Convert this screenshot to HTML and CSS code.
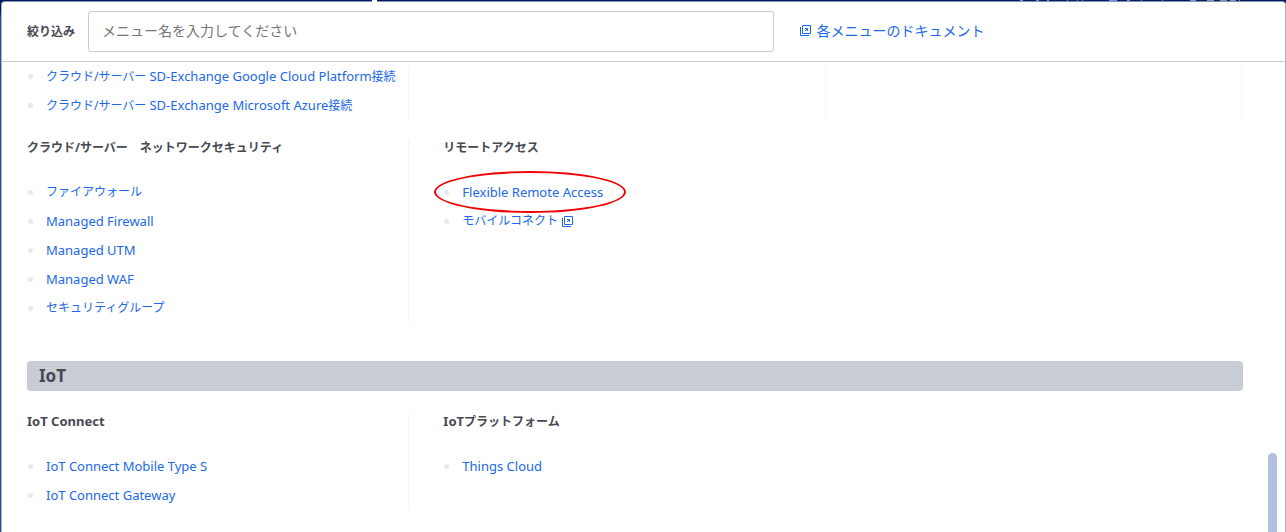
FILE: index.html
```html
<!DOCTYPE html>
<html lang="ja">
<head>
  <meta charset="UTF-8" />
  <meta name="viewport" content="width=device-width, initial-scale=1.0"/>
  <title>メニュー</title>
  <link rel="stylesheet" href="styles.css">
</head>
<body>
  <!-- Page header, mostly covered by the panel -->
  <div class="topbar">
    <div class="pointer"></div>
    <svg class="topbar-items" viewBox="0 0 224 1" aria-hidden="true">
      <path stroke="#8792ab" d="M16 .5h3M27 .5h2M47 .5h1M57 .5h1M62 .5h1M107 .5h3M121 .5h1M142 .5h1M187 .5h7M200 .5h7M210 .5h6M219 .5h1"/>
      <path stroke="#6f95e3" d="M0 .5h3M89 .5h8M170 .5h6"/>
    </svg>
  </div>

  <div class="panel">
    <!-- Filter bar -->
    <header class="filter">
      <label class="filter-label" for="menuFilter">絞り込み</label>
      <input class="filter-input" type="text" id="menuFilter" placeholder="メニュー名を入力してください">
      <a class="doc-link" href="#">
        <svg class="icon" viewBox="0 0 11 11" aria-hidden="true">
          <path d="M2.5 .5h8v8h-8zM.5 2v8.5H9"/>
          <path d="M5 6l2-2M5 3.5h2.5V6"/>
        </svg>
        各メニューのドキュメント
      </a>
    </header>

    <!-- Menu list -->
    <main class="menu">
      <div class="row">
        <section class="col">
          <ul class="links">
            <li><a href="#">クラウド/サーバー <span class="en">SD-Exchange Google Cloud Platform</span>接続</a></li>
            <li><a href="#">クラウド/サーバー <span class="en">SD-Exchange Microsoft Azure</span>接続</a></li>
          </ul>
        </section>
        <section class="col"></section>
        <section class="col"></section>
      </div>

      <div class="row">
        <section class="col">
          <h3>クラウド/サーバー　ネットワークセキュリティ</h3>
          <ul class="links">
            <li><a href="#">ファイアウォール</a></li>
            <li><a class="en" href="#">Managed Firewall</a></li>
            <li><a class="en" href="#">Managed UTM</a></li>
            <li><a class="en" href="#">Managed WAF</a></li>
            <li><a href="#">セキュリティグループ</a></li>
          </ul>
        </section>
        <section class="col last">
          <h3>リモートアクセス</h3>
          <ul class="links">
            <li><a class="en marked" href="#">Flexible Remote Access</a></li>
            <li>
              <a class="external" href="#">モバイルコネクト
                <svg class="icon" viewBox="0 0 11 11" aria-hidden="true">
                  <path d="M2.5 .5h8v8h-8zM.5 2v8.5H9"/>
                  <path d="M5 6l2-2M5 3.5h2.5V6"/>
                </svg>
              </a>
            </li>
          </ul>
        </section>
      </div>

      <h2>IoT</h2>

      <div class="row">
        <section class="col">
          <h3><span class="en">IoT Connect</span></h3>
          <ul class="links">
            <li><a class="en" href="#">IoT Connect Mobile Type S</a></li>
            <li><a class="en" href="#">IoT Connect Gateway</a></li>
          </ul>
        </section>
        <section class="col last">
          <h3><span class="en">IoT</span>プラットフォーム</h3>
          <ul class="links">
            <li><a class="en" href="#">Things Cloud</a></li>
          </ul>
        </section>
      </div>
    </main>
    <div class="scroll-thumb"></div>
  </div>
</body>
</html>
```

FILE: styles.css
```css
*,
*::before,
*::after {
  box-sizing: border-box;
}

body {
  display: flex;
  flex-direction: column;
  margin: 0;
  height: 100vh;
  padding-left: 1px;
  overflow: hidden;
  background: linear-gradient(#001c5c 12px, #34518c 18px);
  color: #484852;
  font-family: "Noto Sans", "Noto Sans CJK JP", sans-serif;
  font-size: 12px;
  line-height: 20px;
}

a {
  color: #1c68ea;
  text-decoration: none;
}

a:hover {
  text-decoration: underline;
}

.topbar {
  display: flex;
  justify-content: space-between;
  height: 1px;
  padding: 0 42px 0 371px;
}

.pointer {
  width: 5px;
  height: 2px;
  background: #fff;
  z-index: 1;
}

.topbar-items {
  width: 224px;
  height: 1px;
}

.panel {
  position: relative;
  flex: 1;
  min-height: 0;
  overflow: hidden;
  background: #fff;
  border: 1px solid #a6b2cb;
  border-top-color: #8492b8;
  border-bottom: none;
  border-radius: 4px 4px 0 0;
}

/* Filter bar */
.filter {
  display: flex;
  align-items: center;
  height: 60px;
  padding: 0 25px;
  border-bottom: 1px solid #ccc;
}

.filter-label {
  margin-right: 13px;
  font-weight: bold;
}

.filter-input {
  width: 55.6%;
  height: 41px;
  padding: 0 13px 2px;
  border: 1px solid #ccc;
  border-radius: 3px;
  font: inherit;
  font-size: 14px;
}

.filter-input::placeholder {
  color: #757575;
}

.doc-link {
  display: flex;
  align-items: center;
  gap: 6px;
  margin-left: 26px;
  padding-bottom: 2px;
  font-size: 14px;
}

.icon {
  width: 11px;
  height: 11px;
  fill: none;
  stroke: currentColor;
}

/* Menu list */
.menu {
  padding: 4px 42px 0 25px;
}

.row {
  display: grid;
  grid-template-columns: repeat(3, 1fr);
  margin: 0 -33px 21px 0;
}

.col {
  margin-right: 34px;
  border-right: 1px solid #f5f5f9;
}

.col.last {
  border-right: none;
}

h2 {
  margin: 39px 0 23px;
  padding: 0 12px;
  border-radius: 4px;
  background: #c8cdd5;
  font-size: 17px;
  line-height: 30px;
}

h3 {
  margin: 0 0 26px;
  font-size: 12px;
  line-height: 16px;
}

/* Latin names run a step larger than the kana */
.en {
  font-size: 13px;
}

h3 .en {
  line-height: 1;
}

.links {
  margin: 0;
  padding: 0;
  list-style: none;
}

.links li {
  display: flex;
  align-items: center;
  height: 20px;
  margin-bottom: 9px;
}

.links li:last-child {
  margin-bottom: 4px;
}

.links li::before {
  content: "";
  width: 5px;
  height: 5px;
  margin: 0 13px 0 1px;
  border-radius: 50%;
  background: #e5e9f2;
}

.external {
  display: flex;
  align-items: center;
  gap: 4px;
}

.marked {
  position: relative;
}

.marked::after {
  content: "";
  position: absolute;
  top: -11px;
  left: -28px;
  width: 192px;
  height: 42px;
  border: 2px solid #f00000;
  border-radius: 50%;
  pointer-events: none;
}

.scroll-thumb {
  position: absolute;
  right: 8px;
  bottom: 0;
  width: 9px;
  height: 79px;
  border-radius: 5px 5px 0 0;
  background: #b0c0dd;
}
```
